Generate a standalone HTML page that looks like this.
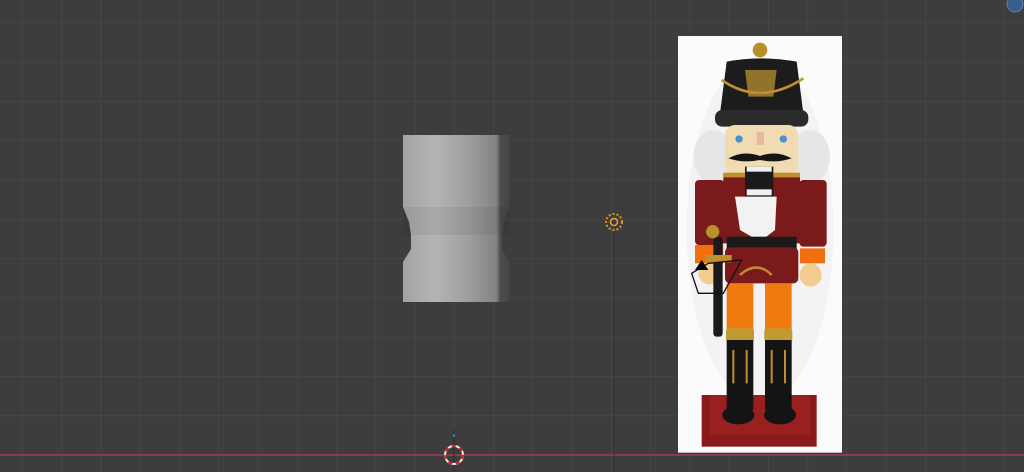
<!DOCTYPE html>
<html><head><meta charset="utf-8"><style>
html,body{margin:0;padding:0;background:#3d3d3d;width:1024px;height:472px;overflow:hidden}
svg{position:absolute;left:0;top:0}
</style></head><body>
<svg width="1024" height="472" viewBox="0 0 1024 472">
<defs>
<pattern id="g" x="454" y="22.4" width="39.25" height="39.3" patternUnits="userSpaceOnUse">
<path d="M0 0V39.3M0 0H39.25" stroke="#4a4a4a" stroke-width="1.2" fill="none"/>
</pattern>
<linearGradient id="cyl" x1="0" x2="1">
<stop offset="0" stop-color="#a3a3a3"/><stop offset="0.3" stop-color="#b4b4b4"/>
<stop offset="0.6" stop-color="#a0a0a0"/><stop offset="0.88" stop-color="#838383"/>
<stop offset="0.92" stop-color="#4c4c4c"/><stop offset="1" stop-color="#464646"/>
</linearGradient>
</defs>
<rect width="1024" height="472" fill="#3d3d3d"/>
<rect width="1024" height="472" fill="url(#g)"/>
<line x1="0" y1="455" x2="1024" y2="455" stroke="#8a3a48" stroke-width="2"/>
<line x1="454" y1="430" x2="454" y2="472" stroke="#2c2c2c" stroke-width="1"/>
<rect x="453" y="434" width="2" height="3" fill="#3a7ad0"/>
<circle cx="454" cy="455" r="9" fill="none" stroke="#e8e8e8" stroke-width="2"/>
<circle cx="454" cy="455" r="9" fill="none" stroke="#d02020" stroke-width="2" stroke-dasharray="4 4"/>
<polygon fill="url(#cyl)" points="403,135 509,135 509,207 504,222 502,235 502,249 509,262 509,302 403,302 403,262 411,249 411,235 409,222 403,207"/>
<rect x="403" y="207" width="106" height="28" fill="#000" opacity="0.06"/>
<circle cx="614" cy="222" r="8" fill="none" stroke="#e89020" stroke-width="2" stroke-dasharray="2 2"/>
<circle cx="614" cy="222" r="3.5" fill="none" stroke="#f0a030" stroke-width="1.5"/>
<line x1="614" y1="232" x2="614" y2="472" stroke="#333" stroke-width="1"/>
<circle cx="1015" cy="4" r="8" fill="#3a5c8a" stroke="#5a80b0"/>
</svg>
<svg style="left:670px;top:30px" width="180" height="430" viewBox="0 0 540 1290">
<rect x="24" y="18" width="492" height="1250" fill="#fbfbfb"/>
<ellipse cx="270" cy="600" rx="220" ry="520" fill="#f3f3f5"/>
<circle cx="270" cy="60" r="22" fill="#b8902a"/>
<path d="M170 95 Q270 75 380 95 L400 250 L150 250 Z" fill="#1c1c1c"/>
<path d="M225 120 L320 120 L310 200 L235 200 Z" fill="#b08a30" opacity="0.8"/>
<path d="M155 150 Q270 230 400 145" stroke="#c09030" stroke-width="8" fill="none"/>
<rect x="135" y="240" width="280" height="50" rx="22" fill="#2a2a2a"/>
<ellipse cx="130" cy="380" rx="60" ry="80" fill="#e6e6e6"/>
<ellipse cx="420" cy="380" rx="60" ry="80" fill="#e6e6e6"/>
<rect x="165" y="285" width="220" height="150" rx="30" fill="#f0dcb0"/>
<circle cx="207" cy="327" r="11" fill="#4a90d0"/><circle cx="340" cy="327" r="11" fill="#4a90d0"/>
<rect x="260" y="305" width="22" height="40" fill="#e8b8a0"/>
<path d="M175 385 Q220 360 270 378 Q320 360 365 385 Q320 400 270 390 Q220 400 175 385Z" fill="#151515"/>
<rect x="160" y="430" width="230" height="210" fill="#7a1a1a"/>
<rect x="75" y="450" width="88" height="195" rx="12" fill="#7a1a1a"/>
<rect x="388" y="450" width="82" height="200" rx="12" fill="#7a1a1a"/>
<rect x="160" y="428" width="230" height="14" fill="#c09030"/>
<rect x="225" y="410" width="85" height="90" fill="#1a1a1a"/>
<rect x="230" y="478" width="75" height="18" fill="#f0f0f0"/>
<rect x="230" y="410" width="75" height="15" fill="#f0f0f0"/>
<path d="M195 500 L320 500 L315 600 L270 635 L210 600Z" fill="#f2f2f2"/>
<rect x="75" y="645" width="85" height="55" fill="#f07010"/>
<rect x="390" y="655" width="75" height="45" fill="#f07010"/>
<ellipse cx="118" cy="730" rx="33" ry="33" fill="#f4cc90"/>
<ellipse cx="422" cy="735" rx="33" ry="35" fill="#f4cc90"/>
<rect x="170" y="620" width="210" height="40" fill="#1a1a1a"/>
<rect x="165" y="652" width="220" height="108" rx="15" fill="#7a1a1a"/>
<path d="M210 735 Q260 690 305 735" stroke="#c09030" stroke-width="7" fill="none"/>
<rect x="170" y="760" width="80" height="150" fill="#f07a10"/>
<rect x="285" y="760" width="80" height="150" fill="#f07a10"/>
<rect x="130" y="620" width="28" height="300" rx="10" fill="#1a1a1a"/>
<circle cx="128" cy="605" r="20" fill="#b8902a"/>
<rect x="105" y="675" width="80" height="22" fill="#c09030"/>
<rect x="168" y="895" width="84" height="40" rx="8" fill="#c09a30"/>
<rect x="283" y="895" width="84" height="40" rx="8" fill="#c09a30"/>
<rect x="95" y="1095" width="345" height="155" fill="#8a1a1a"/>
<rect x="120" y="1095" width="300" height="120" fill="#9a2020"/>
<rect x="170" y="930" width="80" height="210" fill="#141414"/>
<rect x="285" y="930" width="80" height="210" fill="#141414"/>
<ellipse cx="205" cy="1155" rx="48" ry="28" fill="#141414"/>
<ellipse cx="330" cy="1155" rx="48" ry="28" fill="#141414"/>
<path d="M190 960 V1060 M230 960 V1060 M305 960 V1060 M345 960 V1060" stroke="#c09030" stroke-width="6"/>
<path d="M65 730 L115 700 L215 690 L160 790 L85 790 Z" fill="none" stroke="#111" stroke-width="4"/>
<path d="M75 720 L95 690 L115 720 Z" fill="#000"/>
</svg>
</body></html>
